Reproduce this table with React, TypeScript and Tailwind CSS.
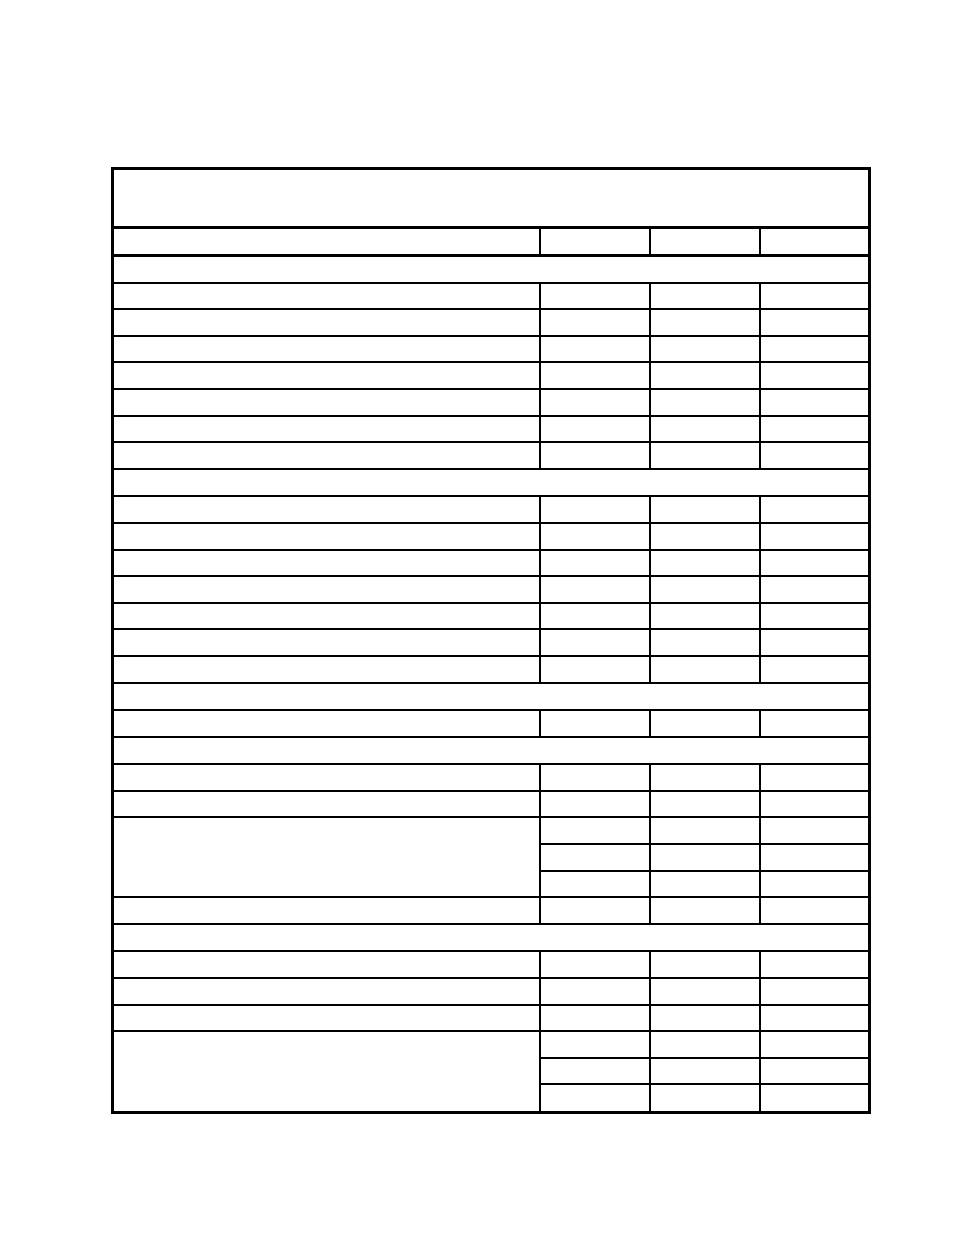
import React from 'react';

type Section = { rows: number[] };

// each number is how many sub-rows the left cell spans
const sections: Section[] = [
  { rows: [1, 1, 1, 1, 1, 1, 1] },
  { rows: [1, 1, 1, 1, 1, 1, 1] },
  { rows: [1] },
  { rows: [1, 1, 3, 1] },
  { rows: [1, 1, 1, 3] },
];

const cell = 'border-2 border-black p-0';

const DataRow = ({ span }: { span: number }) => {
  const rows = [];
  for (let i = 0; i < span; i++) {
    rows.push(
      <tr key={i} className="h-[26.6px]">
        {i === 0 && <td rowSpan={span} className={cell} />}
        <td className={cell} />
        <td className={cell} />
        <td className={cell} />
      </tr>
    );
  }
  return <>{rows}</>;
};

export default function App() {
  return (
    <div className="min-h-[1235px] w-[954px] bg-white pt-[167px] pl-[111px]">
      <div className="w-[760px] border-[3px] border-black">
        <div className="h-[59px] border-b-[3px] border-black" />
        <table className="w-full table-fixed border-collapse border-hidden">
          <colgroup>
            <col className="w-[426px]" />
            <col className="w-[110px]" />
            <col className="w-[110px]" />
            <col className="w-[108px]" />
          </colgroup>
          <tbody>
            <tr className="h-[26px]">
              <td className="border-2 border-b-[3px] border-black p-0" />
              <td className="border-2 border-b-[3px] border-black p-0" />
              <td className="border-2 border-b-[3px] border-black p-0" />
              <td className="border-2 border-b-[3px] border-black p-0" />
            </tr>
            {sections.map((s, si) => (
              <React.Fragment key={si}>
                <tr className="h-[27.6px]">
                  <td colSpan={4} className={cell} />
                </tr>
                {s.rows.map((span, ri) => (
                  <DataRow key={ri} span={span} />
                ))}
              </React.Fragment>
            ))}
          </tbody>
        </table>
      </div>
    </div>
  );
}
